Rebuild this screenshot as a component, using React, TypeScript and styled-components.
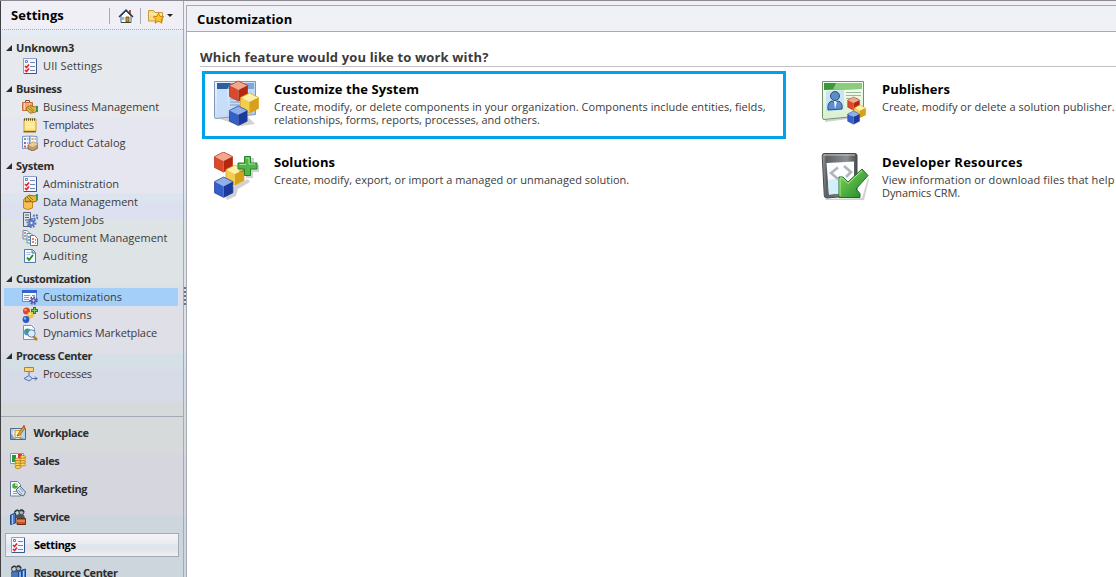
import React from 'react';
import styled, { createGlobalStyle } from 'styled-components';

const Global = createGlobalStyle`
  * { box-sizing: border-box; }
  html, body, #root { height: 100%; }
  body { margin: 0; overflow: hidden; background: #fff; font-family: "Open Sans", "Noto Sans", sans-serif; }
  svg { display: block; flex: none; }
`;

const Shell = styled.div`
  display: flex;
  width: 1116px;
  height: 577px;
  overflow: hidden;
  border-top: 1px solid #8d8a94;
  background: linear-gradient(#f0eff6 0 28px, #e4edf9 29px, #e6e9ed 38px 117px, #e6e6f0 118px 192px,
    #dbe4ef 193px 200px, #dde1ef 201px 218px, #dee3e5 219px 284px, #dfdfe7 285px 352px,
    #d5dfe6 353px 368px, #d7dae7 369px 400px, #d6dadb 401px 452px, #d6d6df 453px 514px, #ced6dd 515px);
`;

const Sidebar = styled.aside`
  display: flex;
  flex-direction: column;
  flex: none;
  width: 184px;
  border-left: 1px solid #3f3f44;
  border-right: 1px solid #a5abb5;
`;

const SideHeader = styled.header`
  display: flex;
  align-items: center;
  flex: none;
  height: 29px;
  margin: 0 0 0 1px;
  padding: 1px 0 0 9px;
  border-bottom: 1px dotted #a9a9b4;
`;

const SideTitle = styled.h1`
  margin: 0 0 2px;
  width: 98px;
  font-size: 13px;
  line-height: 18px;
  font-weight: 700;
  letter-spacing: 0.05px;
  color: #000;
`;

const Separator = styled.span<{ $before?: number; $after: number }>`
  width: 1px;
  height: 16px;
  margin: 0 ${(p) => p.$after}px 0 ${(p) => p.$before ?? 0}px;
  background: #a8adba;
`;

const Tree = styled.nav`
  flex: none;
  height: 386px;
  padding-top: 4px;
`;

const Group = styled.section`
  padding-top: 5px;
`;

const GroupTitle = styled.h2<{ $track?: number }>`
  display: flex;
  align-items: center;
  gap: 4px;
  height: 18px;
  margin: 0;
  padding-left: 5px;
  font-size: 11px;
  font-weight: 700;
  letter-spacing: ${(p) => p.$track ?? 0}px;
  color: #2d2d2d;
  white-space: nowrap;
`;

const Label = styled.span`
  padding-bottom: 2px;
`;

const Item = styled.div<{ $active?: boolean; $track?: number }>`
  display: flex;
  align-items: center;
  gap: 5px;
  height: 18px;
  margin: 0 5px 0 3px;
  padding-left: 18px;
  font-size: 11px;
  letter-spacing: ${(p) => p.$track ?? 0}px;
  color: #3b3b3b;
  white-space: nowrap;
  background: ${(p) => (p.$active ? '#a4cff8' : 'transparent')};
`;

const Modules = styled.nav`
  flex: none;
  padding-top: 2px;
  border-top: 1px solid #a5abb5;
`;

const Module = styled.div<{ $active?: boolean; $track?: number }>`
  display: flex;
  align-items: center;
  gap: ${(p) => (p.$active ? 8 : 7.5)}px;
  height: 24px;
  margin: 2px 4px 4px;
  padding-left: ${(p) => (p.$active ? 4 : 5)}px;
  font-size: 11px;
  font-weight: 700;
  letter-spacing: ${(p) => p.$track ?? 0}px;
  color: ${(p) => (p.$active ? '#000' : '#2d2d2d')};
  white-space: nowrap;
  border: ${(p) => (p.$active ? '1px solid #a5abb5' : '0')};
  background: ${(p) => (p.$active ? 'linear-gradient(#f4f4f8, #e9ebf1 45%, #dde5ec 50%, #e2e5ea 70%, #f0f0f4)' : 'transparent')};
`;

const Splitter = styled.div`
  display: flex;
  flex-direction: column;
  gap: 2px;
  width: 2px;
  padding-top: 286px;
  flex: none;
`;

const Grip = styled.i`
  width: 2px;
  height: 2px;
  background: #6b7380;
`;

const Panel = styled.main`
  flex: 1;
  min-width: 0;
  margin-top: 4px;
  border: solid #a5abb5;
  border-width: 1px 0 0 1px;
  background: #fff;
`;

const PanelHeader = styled.header`
  height: 26px;
  padding-left: 10px;
  font-size: 13px;
  line-height: 26px;
  font-weight: 700;
  letter-spacing: 0.1px;
  color: #000;
  background: #eff1f6;
  border-bottom: 1px solid #a5abb5;
`;

const Question = styled.h2`
  height: 35px;
  margin: 0 0 4px 13px;
  padding-top: 15px;
  font-size: 13px;
  line-height: 20px;
  font-weight: 700;
  letter-spacing: 0.15px;
  color: #3b3b3b;
  white-space: nowrap;
  border-bottom: 1px solid #c0c0c0;
`;

const Features = styled.div`
  display: grid;
  grid-template-columns: 584px 500px;
  grid-template-rows: 68px 68px;
  column-gap: 24px;
  row-gap: 5px;
  margin-left: 15px;
`;

const Feature = styled.article<{ $marked?: boolean }>`
  display: flex;
  gap: 13px;
  padding: ${(p) => (p.$marked ? '5px 0 0 8px' : '8px 0 0 11px')};
  border: ${(p) => (p.$marked ? '3px solid #00a2e8' : '0')};
`;

const FeatureText = styled.div`
  padding-top: 1px;
`;

const FeatureTitle = styled.h3<{ $track?: number }>`
  margin: 0 0 2px;
  font-size: 13px;
  line-height: 18px;
  font-weight: 700;
  letter-spacing: ${(p) => p.$track ?? 0}px;
  color: #000;
  white-space: nowrap;
`;

const Line = styled.p<{ $track?: number }>`
  margin: 0;
  font-size: 11px;
  line-height: 13px;
  letter-spacing: ${(p) => p.$track ?? 0}px;
  color: #3b3b3b;
  white-space: nowrap;
`;

type CubeProps = { x: number; y: number; s: number; c: 'red' | 'gold' | 'blue' };
const shades = {
  red: ['#f2a78f', '#d9492a', '#b5280f'],
  gold: ['#fff0a8', '#f3cd50', '#d8a018'],
  blue: ['#8fb0ea', '#3560c8', '#1c3a9c'],
};
const Cube = ({ x, y, s, c }: CubeProps) => (
  <g transform={`translate(${x} ${y}) scale(${s})`}>
    <path d="M10 0 19 4.5 10 9 1 4.5Z" fill={shades[c][0]} />
    <path d="M1 4.5 10 9V20L1 15.5Z" fill={shades[c][1]} />
    <path d="M19 4.5 10 9V20L19 15.5Z" fill={shades[c][2]} />
    <path d="M10 0 19 4.5V15.5L10 20 1 15.5V4.5Z" fill="none" stroke={shades[c][2]} strokeWidth=".7" />
  </g>
);

const Svg = ({ size = 16, children }: { size?: number; children: React.ReactNode }) => (
  <svg width={size} height={size} viewBox={`0 0 ${size} ${size}`}>{children}</svg>
);

const Gear = ({ x, y, r, fill }: { x: number; y: number; r: number; fill: string }) => (
  <g>
    <circle cx={x} cy={y} r={r} fill="none" stroke={fill} strokeWidth="2" strokeDasharray="1.7 1.3" />
    <circle cx={x} cy={y} r={r - 1.5} fill="#8b98dc" stroke={fill} strokeWidth="1.4" />
    <circle cx={x} cy={y} r=".9" fill="#eef" />
  </g>
);

const People = ({ x = 0 }: { x?: number }) => (
  <g transform={`translate(${x} 0)`}>
    <path d="M4 9Q4 5 7 5h5q3 1 3 5Z" fill="#4b5560" />
    <circle cx="7" cy="3.8" r="2.6" fill="#c9d1d6" stroke="#39434c" />
    <circle cx="11.5" cy="3.2" r="2.5" fill="#aab4bb" stroke="#39434c" />
    <path d="M5 3Q7 0 9 2M10 2q2-2 4 1" stroke="#303840" strokeWidth="1.4" fill="none" />
  </g>
);

const icons: Record<string, React.ReactNode> = {
  home: <Svg>
    <path d="M11 2h2v4h-2z" fill="#b95a35" />
    <path d="M3 8 8 3l5 5v6.500H3Z" fill="#fffef5" stroke="#4a6288" />
    <path d="M1 9 8 2l7 7" fill="none" stroke="#283e61" strokeWidth="1.5" />
    <path d="M4 9h2.500v3H4z" fill="#8ec0f0" /><path d="M8 9h3v5H8z" fill="#d2902c" stroke="#694214" strokeWidth=".8" />
    <path d="M3 14.500h10" stroke="#344f36" />
  </Svg>,
  favorite: <Svg>
    <path d="M.5 13V2.500h5L7 4.500h7.500V13Z" fill="#f9dc83" stroke="#c49c3b" />
    <path d="M1 6h13" stroke="#fff3bd" />
    <path d="m10.500 5 1.600 3.400 3.700.4-2.800 2.500.9 3.900-3.400-2-3.400 2 .9-3.900L5.300 8.800l3.700-.4Z" fill="#ffc62a" stroke="#b97508" strokeWidth=".8" />
  </Svg>,
  checklist: <Svg>
    <path d="M1.500.5h13v15h-13z" fill="#f5f8ff" stroke="#8ba0cf" />
    <path d="M14.500 1v14.500H2" fill="none" stroke="#3c568f" />
    <path d="M3.500 2.500h2v2h-2z" fill="#fff" stroke="#6b82b0" />
    <path d="m3 8 1.500 1.500L7 6.500M3 12l1.500 1.500L7 10.500" fill="none" stroke="#e02222" strokeWidth="1.600" />
    <path d="M8 4.500h5M8 8.500h5M8 12.500h5" stroke="#7085b1" />
  </Svg>,
  business: <Svg>
    <path d="M3.500 4V1.500h4V4" fill="none" stroke="#8c4a2c" />
    <path d="M.5 3.500h10v8H.5z" fill="#f3a377" stroke="#c96a3c" /><path d="M2.500 4v7M7.500 4v4" stroke="#fbd3bb" />
    <path d="M4 9 8 6.500l5 1.500 2-1v5.500l-3 1-4 .8-3-3Z" fill="#e4b93c" stroke="#82621b" strokeWidth=".8" />
    <path d="m6 9 5 4M8 8l4 4" stroke="#82621b" strokeWidth=".7" /><path d="M14 7h2v6h-2z" fill="#43905c" />
  </Svg>,
  template: <Svg>
    <path d="M2 2h12v12H2z" fill="#ffe98c" stroke="#c9a13a" /><path d="M1.500 14h12.500v1.500H1.500z" fill="#8d6717" />
    <path d="M2 2.500h12" stroke="#68531e" strokeWidth="2.500" strokeDasharray="1 1" /><path d="M4 7h8M4 10h8" stroke="#fff4b8" />
  </Svg>,
  catalog: <Svg>
    <path d="M.5 1.500 7.500 1v12l-7 .5ZM8 1l7 .5V12l-7 1Z" fill="#f1f7ff" stroke="#7794c6" />
    <path d="M2 3h2v2H2z" fill="#64b852" /><path d="M2 7h2v2H2z" fill="#9b59d2" /><path d="M2 10.500h2v2H2z" fill="#e45353" /><path d="M9.500 3h2v2h-2z" fill="#eca927" />
    <path d="M5 4h1.500M5 8h1.500M12.500 4H14" stroke="#587ab5" />
    <path d="m6 10 5-3 5 2v4l-5 3-5-2Z" fill="#c19a68" stroke="#7f5a33" strokeWidth=".8" /><path d="m6 10 5 2 5-3-5-2Z" fill="#e8cda3" />
  </Svg>,
  data: <Svg>
    <path d="M1.500 6v8q4 3 9 0V6" fill="#f8c052" stroke="#c48420" /><ellipse cx="6" cy="6" rx="4.500" ry="2" fill="#ffe38a" stroke="#b77514" />
    <path d="M3 4 7 1l5 1 3-1v6l-4 1-4-1-3 1Z" fill="#e8b934" stroke="#765514" strokeWidth=".8" /><path d="M5 3l4 4M7 2l4 4" stroke="#765514" strokeWidth=".7" /><path d="M14 0h2v6h-2z" fill="#3a9a66" />
  </Svg>,
  jobs: <Svg>
    <path d="M1.500.5h7v14h-7z" fill="#dce2e9" stroke="#59636f" /><path d="M3 3h4M3 5.500h4M3 8h4" stroke="#59636f" />
    <Gear x={9.500} y={11} r={4} fill="#5474bd" /><Gear x={13.500} y={5} r={2} fill="#5474bd" />
  </Svg>,
  documents: <Svg>
    <path d="M1 .5h4l2 2V9H1Z" fill="#eef5ff" stroke="#6b88b6" /><path d="M5 3.500h4l2 2V13H5Z" fill="#eef5ff" stroke="#6b88b6" />
    <path d="M8.500 5.500h4l3 3v7h-7Z" fill="#fff" stroke="#5574aa" /><path d="M2 3h2M2 6h2" stroke="#de6946" strokeWidth="1.5" /><path d="M6 7h2M6 10h2" stroke="#4ca357" strokeWidth="1.5" /><path d="M10 9h2M10 12h2" stroke="#e95630" strokeWidth="1.5" /><path d="M13 10h1M13 13h1" stroke="#5fa34a" strokeWidth="1.5" />
  </Svg>,
  audit: <Svg>
    <path d="M2.500 1.500h8l3 3v10h-11Z" fill="#f4f9ff" stroke="#5777a6" /><path d="M10 2v3h3" fill="#a8c4e8" stroke="#5777a6" />
    <path d="m5 9.500 2 2.500 4-5" fill="none" stroke="#238a28" strokeWidth="1.800" /><path d="M4.500 4.500h4M4.500 6.500h4" stroke="#a6bbd9" />
  </Svg>,
  customize: <Svg>
    <path d="M.5 1.500h14v11H.5z" fill="#f7faff" stroke="#6888ca" /><path d="M0 1h15v3H0z" fill="#3565cf" /><path d="M2 6.500h6M2 8.500h5M2 10.500h5M10 6.500h3" stroke="#7f9bce" />
    <Gear x={11.500} y={11.500} r={3.300} fill="#5255a5" />
  </Svg>,
  solutions: <Svg>
    <circle cx="4.500" cy="4" r="3.500" fill="#df4325" /><circle cx="3.500" cy="3" r="1.300" fill="#f69778" /><circle cx="8.500" cy="8" r="3.200" fill="#f1c13a" /><circle cx="7.700" cy="7" r="1.200" fill="#fff1a0" />
    <circle cx="4" cy="12.500" r="3.400" fill="#2859c6" /><circle cx="3" cy="11.500" r="1.200" fill="#91b5f5" /><path d="M12.500 0v7M9 3.500h7" stroke="#168a2c" strokeWidth="3" /><path d="M12.500 1v5M10 3.500h5" stroke="#6dcd61" />
  </Svg>,
  market: <Svg>
    <path d="M1.500.5h8l3 3v11h-11Z" fill="#f6faff" stroke="#7991b7" /><circle cx="5.500" cy="7" r="3.500" fill="#4b91d8" /><path d="M3 5q3-2 4 0L5 9Z" fill="#3da34b" />
    <path d="m11 11 4 4" stroke="#bd7d29" strokeWidth="2.500" /><circle cx="9.500" cy="8.500" r="3.700" fill="#d7edff" stroke="#6b85a7" />
  </Svg>,
  process: <Svg>
    <path d="M2.500 1.500h9v4h-9z" fill="#ffd272" stroke="#b18034" /><path d="M7 6v3M10 12.500h5M13 10.500l2 2-2 2" fill="none" stroke="#4b65a8" />
    <path d="m7 9.500 3.500 3L7 15l-5-2.500Z" fill="#c6d7f8" stroke="#5572b4" />
  </Svg>,
  workplace: <Svg>
    <path d="M.5 3.500h15v11H.5z" fill="#7d9cc4" stroke="#4a6b98" /><path d="M1 4h14v10L1 9Z" fill="#b4cfea" /><circle cx="7.500" cy="9" r="5" fill="#e9f1f8" />
    <path d="M5 5.500h6v7H5z" fill="#fff2ac" stroke="#cb9225" /><path d="m8 9 5-7 2 1-5 7-3 1Z" fill="#f5a229" stroke="#765025" strokeWidth=".7" /><path d="m13 1 2 1" stroke="#d54b39" strokeWidth="2" />
  </Svg>,
  sales: <Svg>
    <path d="M.5.5h13v10H.5z" fill="#fff" stroke="#7e99b7" /><path d="M2 2h4v7H2z" fill="#29982d" /><path d="M8 1h4v5H8z" fill="#d7352c" />
    {[6, 8.500, 11, 13.500].map((y) => <ellipse key={y} cx="8" cy={y + .5} rx="3" ry="1.500" fill="#ffd660" stroke="#b97917" strokeWidth=".8" />)}
    {[3, 5.500, 8, 10.500].map((y) => <ellipse key={y} cx="12.800" cy={y + 1} rx="2.800" ry="1.500" fill="#ffd660" stroke="#b97917" strokeWidth=".8" />)}
  </Svg>,
  marketing: <Svg>
    <path d="M.5.500h7l3 3v11.500H.5Z" fill="#f6faff" stroke="#6782a9" /><circle cx="5" cy="5" r="2.800" fill="#46ad35" /><path d="M5 5V2q3 0 3 3Z" fill="#b7e285" /><path d="M3 10.500h4M3 12.500h4" stroke="#84a0c7" />
    <path d="m6 9 4-4 5.500 6-2 4-5-2Z" fill="#d7e0eb" stroke="#52698c" /><path d="m8 9 4 4M10 7l3 4" stroke="#869cba" />
  </Svg>,
  service: <Svg>
    <People /><path d="m.5 6 5-2v10l-5 1.500Z" fill="#4679c8" stroke="#224b8f" /><path d="M2.500 6v9" stroke="#a2c5f2" />
    <path d="M7 9.500h8.500v6H7z" fill="#c3572b" stroke="#70280f" /><path d="M7 12h8" stroke="#f0b071" />
  </Svg>,
  resource: <Svg>
    <People x={-3} /><path d="M1 9q4-5 9 0v7H1Z" fill="#4379ba" /><path d="m8.500 7 3-2v10l-3 1ZM12 5l3.500-1v10L12 15Z" fill="#4e82d2" stroke="#214a91" /><path d="M10 7v7M13.500 6v7" stroke="#b3d2f6" />
  </Svg>,
};

const Shadow = ({ d }: { d: string }) => <path d={d} fill="#000" opacity=".18" />;

const bigIcons: Record<string, React.ReactNode> = {
  system: <Svg size={48}>
    <defs><linearGradient id="win" x2="1" y2="1"><stop stopColor="#eef6ff" /><stop offset="1" stopColor="#a5c7ee" /></linearGradient></defs>
    <Shadow d="M4 39 30 33 42 45 28 47Z" />
    <path d="M1.500 2.500h41v33L3 39.500q-1.500 0-1.500-2Z" fill="url(#win)" stroke="#8199b8" /><path d="M4 4h37v6H4z" fill="#2e5e9d" /><path d="M18 4h23v6H14z" fill="#7ea9d7" />
    <path d="M4 10h10v26l-10 1Z" fill="#c7defa" /><path d="M17 20h13M17 23h12M17 26h10" stroke="#7e9ccc" />
    <Cube x={15.500} y={2} s={1} c="red" /><Cube x={26.500} y={14} s={1} c="gold" /><Cube x={15.500} y={27} s={.98} c="blue" />
  </Svg>,
  solution: <Svg size={48}>
    <Shadow d="M12 44 22 33 35 27 37 30 25 37 23 44 14 48Z" />
    <Cube x={0.500} y={0} s={1} c="red" /><Cube x={12} y={13} s={1} c="gold" /><Cube x={0.500} y={25} s={1.02} c="blue" />
    <Shadow d="M26 12h8V6h7v7h5v7h-6v6h-7v-6h-7Z" /><path d="M31.500 4.500h6v6.500h6.500v6h-6.500v6.500h-6V17H25v-6h6.500Z" fill="#56b54a" stroke="#23852d" /><path d="M33 6h3v6h6M26.500 12.500H33" fill="none" stroke="#a9e391" />
  </Svg>,
  publisher: <Svg size={48}>
    <defs><linearGradient id="card" y2="1" x2="0"><stop stopColor="#f6fff2" /><stop offset="1" stopColor="#d8efcf" /></linearGradient></defs>
    <Shadow d="M4 41 34 37 35 39 4 43Z" /><path d="M1.500 2.500h41v34L3 40.500q-1.500 0-1.500-2Z" fill="url(#card)" stroke="#71906b" /><path d="M3 4h38v6L3 11Z" fill="#3b993c" /><path d="M15 4h26v6L12 10.500Z" fill="#8bcd7a" />
    <path d="M5 12 23 11v20L5 33Z" fill="#c9e5f4" /><circle cx="14" cy="17" r="4.500" fill="#5c8dc4" stroke="#294e79" /><path d="M7 31q-1-8 4-9l3 2 3-2q5 1 4 8Z" fill="#5b90cc" stroke="#294e79" /><path d="m13 23 1 7 2-7" fill="#eef" />
    <path d="M25 13.500h15M25 16.500h15M25 19.500h12" stroke="#9db7a1" />
    <Cube x={26} y={18} s={.66} c="red" /><Cube x={32.500} y={26} s={.64} c="gold" /><Cube x={26} y={32} s={.66} c="blue" />
  </Svg>,
  developer: <Svg size={48}>
    <defs>
      <linearGradient id="arrow" x2="1" y2="1"><stop stopColor="#8ad85b" /><stop offset="1" stopColor="#188528" /></linearGradient>
      <linearGradient id="frame" x2="1" y2="0"><stop stopColor="#a2a4a6" /><stop offset=".12" stopColor="#5d6063" /><stop offset=".7" stopColor="#8c8f92" /><stop offset="1" stopColor="#4a4d50" /></linearGradient>
    </defs>
    <Shadow d="M4 47 41 46 47 26 48 27 43 48H5Z" />
    <path d="M3 1.500h31q2 0 2 2v38q0 2-2 2L6 46q-2.500 0-2.700-2L1.200 4q0-2.500 1.800-2.500Z" fill="url(#frame)" stroke="#45494c" />
    <path d="M3 3h31" stroke="#c4c6c8" />
    <path d="M5.500 11 33 9.500V40L8 42.500Z" fill="#fbfdff" /><path d="m7 28 16-3v16L8 42.500Z" fill="#d3eff9" />
    <path d="m17 15.500-7 5.500 7 6M23 14l7 6-5 5" fill="none" stroke="#b2b6ba" strokeWidth="2.600" />
    <path d="m41 17 6 6.500L35 37l4 4.500v4H18V25h4l5 5Z" fill="url(#arrow)" stroke="#17702a" /><path d="M41 18.500 27 31.500 21.500 26H19v18" fill="none" stroke="#b5ea8e" />
  </Svg>,
};

type Entry = [icon: string, label: string, track?: number];
const tree: { title: string; track?: number; items: Entry[] }[] = [
  { title: 'Unknown3', track: -0.15, items: [['checklist', 'UII Settings', 0.12]] },
  { title: 'Business', track: -0.3, items: [['business', 'Business Management'], ['template', 'Templates', -0.3], ['catalog', 'Product Catalog', 0.06]] },
  { title: 'System', track: -0.3, items: [['checklist', 'Administration'], ['data', 'Data Management'], ['jobs', 'System Jobs', -0.05], ['documents', 'Document Management'], ['audit', 'Auditing', 0.25]] },
  { title: 'Customization', track: -0.38, items: [['customize', 'Customizations'], ['solutions', 'Solutions', 0.15], ['market', 'Dynamics Marketplace', -0.1]] },
  { title: 'Process Center', track: -0.39, items: [['process', 'Processes', -0.25]] },
];
const modules: Entry[] = [
  ['workplace', 'Workplace', -0.35], ['sales', 'Sales', -0.45], ['marketing', 'Marketing', -0.36],
  ['service', 'Service', -0.45], ['checklist', 'Settings', -0.35], ['resource', 'Resource Center', -0.42],
];
const features: { icon: string; title: string; track?: number; lines: [string, number?][] }[] = [
  { icon: 'system', title: 'Customize the System', track: 0.08, lines: [['Create, modify, or delete components in your organization. Components include entities, fields,', 0.042], ['relationships, forms, reports, processes, and others.', -0.02]] },
  { icon: 'publisher', title: 'Publishers', lines: [['Create, modify or delete a solution publisher.', 0.03]] },
  { icon: 'solution', title: 'Solutions', track: 0.08, lines: [['Create, modify, export, or import a managed or unmanaged solution.', 0.015]] },
  { icon: 'developer', title: 'Developer Resources', track: 0.27, lines: [['View information or download files that help', 0.11], ['Dynamics CRM.', -0.08]] },
];

export default function App() {
  return (
    <>
      <Global />
      <Shell>
        <Sidebar>
          <SideHeader>
            <SideTitle>Settings</SideTitle>
            <Separator $after={8} />
            {icons.home}
            <Separator $before={6} $after={7} />
            {icons.favorite}
            <svg width="9" height="4" viewBox="0 0 9 4"><path d="M3 0h6L6 3Z" fill="#222" /></svg>
          </SideHeader>
          <Tree>
            {tree.map((g) => (
              <Group key={g.title}>
                <GroupTitle $track={g.track}>
                  <svg width="6" height="6" viewBox="0 0 6 6"><path d="M6 0v6H0Z" fill="#2d2d2d" /></svg>
                  <Label>{g.title}</Label>
                </GroupTitle>
                {g.items.map(([icon, label, track]) => (
                  <Item key={label} $active={label === 'Customizations'} $track={track}>
                    {icons[icon]}
                    <Label>{label}</Label>
                  </Item>
                ))}
              </Group>
            ))}
          </Tree>
          <Modules>
            {modules.map(([icon, label, track]) => (
              <Module key={label} $active={label === 'Settings'} $track={track}>
                {icons[icon]}
                <Label>{label}</Label>
              </Module>
            ))}
          </Modules>
        </Sidebar>
        <Splitter><Grip /><Grip /><Grip /><Grip /><Grip /></Splitter>
        <Panel>
          <PanelHeader>Customization</PanelHeader>
          <Question>Which feature would you like to work with?</Question>
          <Features>
            {features.map((f) => (
              <Feature key={f.title} $marked={f.icon === 'system'}>
                {bigIcons[f.icon]}
                <FeatureText>
                  <FeatureTitle $track={f.track}>{f.title}</FeatureTitle>
                  {f.lines.map(([text, track]) => <Line key={text} $track={track}>{text}</Line>)}
                </FeatureText>
              </Feature>
            ))}
          </Features>
        </Panel>
      </Shell>
    </>
  );
}
